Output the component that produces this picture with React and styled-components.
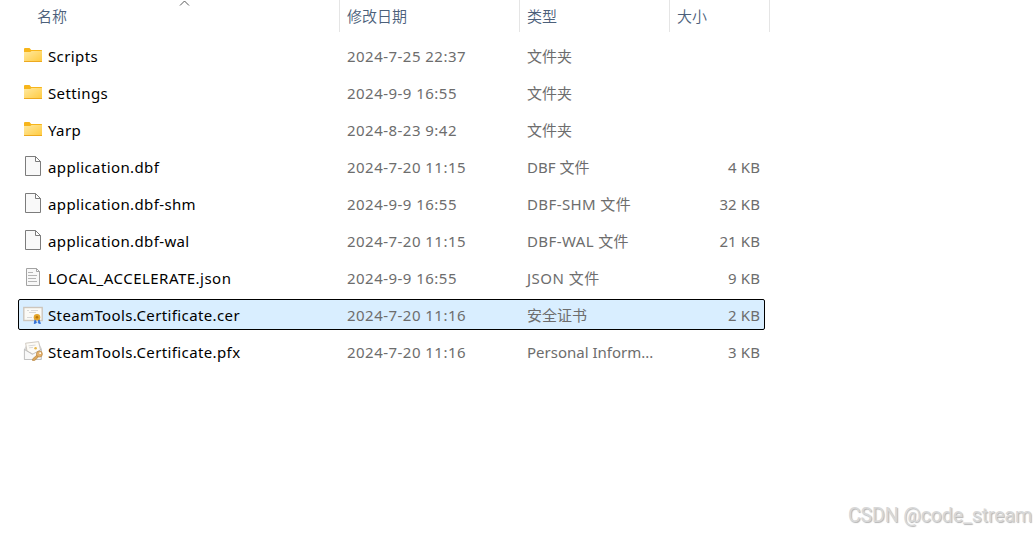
import React from 'react'
import styled, { createGlobalStyle } from 'styled-components'

const GlobalStyle = createGlobalStyle`
  body{
    margin : 0;
    background : #fff;
    overflow : hidden;
  }
`;

const files = [
  { icon: 'folder', name: 'Scripts', date: '2024-7-25 22:37', type: '文件夹' },
  { icon: 'folder', name: 'Settings', date: '2024-9-9 16:55', type: '文件夹' },
  { icon: 'folder', name: 'Yarp', date: '2024-8-23 9:42', type: '文件夹' },
  { icon: 'blank', name: 'application.dbf', date: '2024-7-20 11:15', type: 'DBF 文件', size: '4 KB' },
  { icon: 'blank', name: 'application.dbf-shm', date: '2024-9-9 16:55', type: 'DBF-SHM 文件', size: '32 KB', track: 0.4 },
  { icon: 'blank', name: 'application.dbf-wal', date: '2024-7-20 11:15', type: 'DBF-WAL 文件', size: '21 KB', track: 0.4 },
  { icon: 'text', name: 'LOCAL_ACCELERATE.json', date: '2024-9-9 16:55', type: 'JSON 文件', size: '9 KB', track: 0.5 },
  { icon: 'cer', name: 'SteamTools.Certificate.cer', date: '2024-7-20 11:16', type: '安全证书', size: '2 KB', selected: true },
  { icon: 'pfx', name: 'SteamTools.Certificate.pfx', date: '2024-7-20 11:16', type: 'Personal Inform...', size: '3 KB' },
]

const FolderIcon = () => (
  <svg width="20" height="20" viewBox="0 0 20 20">
    <defs>
      <linearGradient id="folder" x1="0" y1="0" x2="1" y2="1">
        <stop offset="0" stopColor="#ffe9a0" />
        <stop offset="1" stopColor="#ffca3e" />
      </linearGradient>
    </defs>
    <path d="M1 4Q1 3 2 3H6.5L8.2 5H18.4Q19 5 19 5.6V9H1z" fill="#f7b51a" />
    <path d="M1 7h6.2l1.4-1H19v10.4q0 .6-.6.6H1.6q-.6 0-.6-.6z" fill="url(#folder)" />
    <path d="M1 16.5h18" stroke="#eda91f" />
  </svg>
)

const BlankIcon = () => (
  <svg width="20" height="20" viewBox="0 0 20 20">
    <path d="M2.5 .5h10l5 5v14h-15z" fill="#f9f9f9" stroke="#7c7c7c" />
    <path d="M12.5 .5v5h5z" fill="#fff" stroke="#7c7c7c" />
  </svg>
)

const TextIcon = () => (
  <svg width="20" height="20" viewBox="0 0 20 20">
    <path d="M3.5 1.5h10l3 3v14h-13z" fill="#f8f8f8" stroke="#a3a3a3" />
    <path d="M13.5 1.5v3h3z" fill="#fff" stroke="#a3a3a3" />
    <path d="M5 5.5h5M5 8.5h9M5 11.5h8M5 14.5h9" stroke="#b4b4b4" />
  </svg>
)

const CerIcon = () => (
  <svg width="20" height="20" viewBox="0 0 20 20">
    <rect x=".8" y="3.5" width="18.4" height="13" fill="#fbfaf6" stroke="#cdc6bd" strokeWidth="1.4" />
    <path d="M4 6.5h2M8 6.5h7M6 8.5h7M4 13.5h5" stroke="#cfcfcf" strokeWidth=".8" />
    <path d="M12.2 15l-1 4.6 2.2-.8zM15.8 15l1.6 4.6-2.2-.7z" fill="#2f6fd6" stroke="#2f6fd6" strokeWidth=".9" />
    <circle cx="14" cy="13.3" r="3.3" fill="#e3a52b" />
    <circle cx="14" cy="13.3" r="1.3" fill="#b97508" />
  </svg>
)

const PfxIcon = () => (
  <svg width="20" height="20" viewBox="0 0 20 20">
    <path d="M1 8l3-5 12-1 3 6v10.5H1z" fill="#d9d9d9" />
    <path d="M2.6 2.2L15.6 .6l2 8.9-7 4L4 10z" fill="#fdfbf6" stroke="#c5beb4" strokeWidth=".8" />
    <path d="M5.5 4.8l7-.7M6 6.8l4-.4" stroke="#cfcfcf" strokeWidth=".8" />
    <circle cx="12.6" cy="7.2" r="1.3" fill="#e6b74c" />
    <path d="M1.4 8.5l8 4.8 8.8-4.8v10H1.4z" fill="#f8f8f8" stroke="#b5b5b5" strokeWidth=".8" />
    <path d="M14 14l-4.3 3.8-.2 1.7h2.2l4-3.8" fill="#dba659" stroke="#b27d38" strokeWidth=".6" />
    <circle cx="16.4" cy="13" r="3" fill="#e5b26c" stroke="#b27d38" strokeWidth=".6" />
    <circle cx="17.2" cy="12.2" r=".9" fill="#fff" />
  </svg>
)

const icons = { folder: FolderIcon, blank: BlankIcon, text: TextIcon, cer: CerIcon, pfx: PfxIcon }

const FileItem = ({ file }) => {
  const { icon, name, date, type, size, selected, track } = file;
  const Icon = icons[icon];
  return (
    <Row $selected={selected}>
      <IconBox><Icon /></IconBox>
      <Name $track={icon === 'text' ? 0.48 : 0.38}>{name}</Name>
      <Cell $track={0.47}>{date}</Cell>
      <Cell $track={track}>{type}</Cell>
      <Size $track={0.1}>{size}</Size>
    </Row>
  )
}

const App = () => {
  return (
    <Explorer>
      <GlobalStyle />
      <Header>
        <HeaderCell $pad={37}>
          名称
          <SortArrow width="11" height="7" viewBox="0 0 11 7">
            <path d="M1 5.5L5.5 1L10 5.5" fill="none" stroke="#5a5a5a" />
          </SortArrow>
        </HeaderCell>
        <HeaderCell>修改日期</HeaderCell>
        <HeaderCell>类型</HeaderCell>
        <HeaderCell>大小</HeaderCell>
      </Header>
      <List>
        {files.map(file => <FileItem key={file.name} file={file} />)}
      </List>
      <Watermark>CSDN @code_stream</Watermark>
    </Explorer>
  )
}

const Explorer = styled.div`
  display : flex;
  flex-direction : column;
  width : 1036px;
  height : 533px;
  font-family : 'Noto Sans', 'Noto Sans CJK SC', sans-serif;
  font-size : 15px;
  color : #6d6d6d;
  background : #fff;
`;

const Header = styled.div`
  display : grid;
  grid-template-columns : 340px 180px 150px 100px;
  height : 32px;
  color : #4c607a;
`;

const HeaderCell = styled.div`
  position : relative;
  padding-left : ${({ $pad }) => $pad || 7}px;
  line-height : 32px;
  font-weight : 350;
  border-right : 1px solid #e5e5e5;
`;

const SortArrow = styled.svg`
  position : absolute;
  left : 179px;
  top : 0;
`;

const List = styled.div`
  display : flex;
  flex-direction : column;
  gap : 6px;
  padding : 8px 0 0 18px;
`;

const Row = styled.div`
  display : grid;
  grid-template-columns : 29px 299px 180px 150px 83px;
  align-items : center;
  box-sizing : border-box;
  width : 747px;
  height : 31px;
  border : 1px solid ${({ $selected }) => $selected ? '#000' : 'transparent'};
  border-radius : 2px;
  background : ${({ $selected }) => $selected ? '#d9eeff' : 'transparent'};
  line-height : 29px;
  white-space : nowrap;
`;

const IconBox = styled.div`
  display : flex;
  padding-left : 4px;
  padding-bottom : 1px;
`;

const Cell = styled.div`
  padding-top : 2px;
  line-height : 27px;
  letter-spacing : ${({ $track }) => $track || 0}px;
`;

const Name = styled(Cell)`
  color : #000;
`;

const Size = styled(Cell)`
  text-align : right;
`;

const Watermark = styled.div`
  align-self : flex-end;
  margin : auto 4px 5px 0;
  font-family : Roboto, 'Liberation Sans', sans-serif;
  font-size : 19.5px;
  font-weight : 400;
  line-height : 24px;
  letter-spacing : -.1px;
  color : #d8d8d8;
  text-shadow : 1px 1px 1px #b4b4b4;
`;

export default App
